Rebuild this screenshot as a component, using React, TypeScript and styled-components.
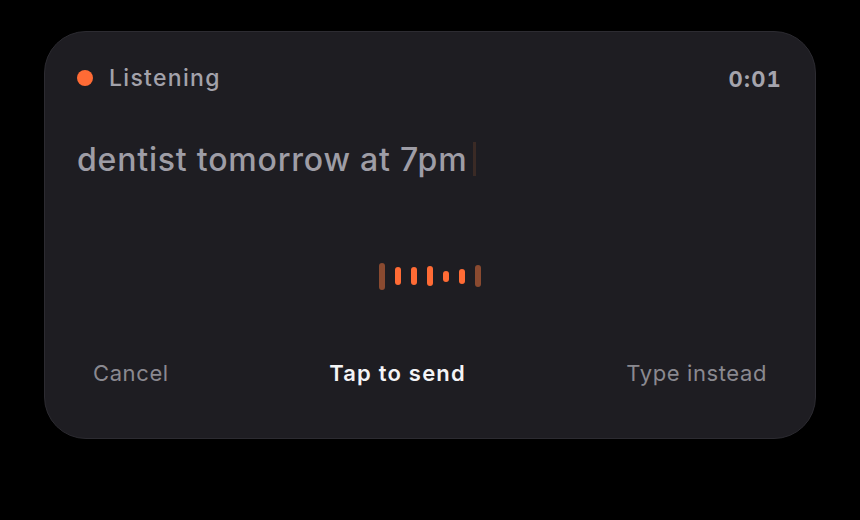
import React from "react";
import styled, { createGlobalStyle } from "styled-components";

const Global = createGlobalStyle`
  html, body { margin: 0; padding: 0; background: #000; }
  body { font-family: Inter, "Noto Sans", sans-serif; -webkit-font-smoothing: antialiased; }
`;

const Page = styled.div`
  width: 860px;
  height: 520px;
  box-sizing: border-box;
  padding: 31px 44px 0 44px;
`;

const Card = styled.div`
  box-sizing: border-box;
  width: 772px;
  height: 408px;
  background: #1e1d22;
  border: 1px solid #2c2b31;
  border-radius: 42px;
  padding: 29px 33px 0 32px;
  display: flex;
  flex-direction: column;
`;

const Header = styled.div`
  display: flex;
  align-items: center;
  justify-content: space-between;
  height: 34px;
`;

const Status = styled.div`
  display: flex;
  align-items: center;
  gap: 16px;
  font-size: 23px;
  font-weight: 500;
  color: #a3a2ab;
  letter-spacing: 1.3px;
`;

const Dot = styled.span`
  width: 16px;
  height: 16px;
  border-radius: 50%;
  background: #ff6b35;
  flex: none;
`;

const Timer = styled.div`
  font-size: 22px;
  font-weight: 700;
  color: #a5a4ad;
  letter-spacing: 1.2px;
  font-variant-numeric: tabular-nums;
  margin-top: 2px;
`;

const Transcript = styled.div`
  margin-top: 42px;
  display: flex;
  align-items: center;
  font-size: 32px;
  font-weight: 500;
  color: #9e9da6;
  letter-spacing: 0.8px;
  height: 44px;
`;

const Caret = styled.span`
  display: inline-block;
  width: 3px;
  height: 34px;
  margin-left: 6px;
  background: #3a2a25;
`;

const Wave = styled.div`
  margin-top: 80px;
  height: 30px;
  display: flex;
  align-items: center;
  justify-content: center;
  gap: 10px;
`;

const Bar = styled.span<{ $h: number; $dim?: boolean }>`
  width: 6px;
  height: ${(p) => p.$h}px;
  border-radius: 3px;
  background: ${(p) => (p.$dim ? "#8a4a30" : "#ff6b35")};
`;

const Actions = styled.div`
  margin-top: 69px;
  display: flex;
  align-items: center;
  justify-content: space-between;
  padding: 0 15px 0 16px;
`;

const Action = styled.button<{ $primary?: boolean }>`
  background: none;
  border: none;
  padding: 0;
  font-family: inherit;
  font-size: 22px;
  font-weight: ${(p) => (p.$primary ? 600 : 400)};
  letter-spacing: ${(p) => (p.$primary ? "1.2px" : "0.6px")};
  color: ${(p) => (p.$primary ? "#f4f4f6" : "#8a8990")};
  cursor: pointer;
`;

const bars = [
  { h: 27, dim: true },
  { h: 18 },
  { h: 18 },
  { h: 20 },
  { h: 11 },
  { h: 15 },
  { h: 22, dim: true },
];

export default function App() {
  return (
    <>
      <Global />
      <Page>
        <Card>
          <Header>
            <Status>
              <Dot />
              Listening
            </Status>
            <Timer>0:01</Timer>
          </Header>
          <Transcript>
            dentist tomorrow at 7pm
            <Caret />
          </Transcript>
          <Wave>
            {bars.map((b, i) => (
              <Bar key={i} $h={b.h} $dim={b.dim} />
            ))}
          </Wave>
          <Actions>
            <Action>Cancel</Action>
            <Action $primary>Tap to send</Action>
            <Action>Type instead</Action>
          </Actions>
        </Card>
      </Page>
    </>
  );
}
